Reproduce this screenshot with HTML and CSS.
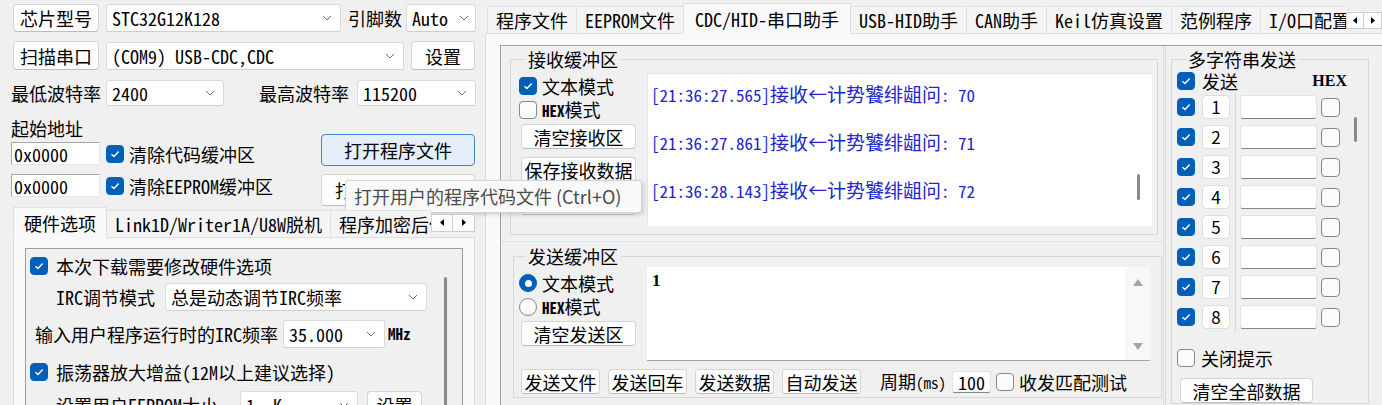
FILE: index.html
```html
<!DOCTYPE html>
<html lang="zh-CN">

<head>
    <meta charset="UTF-8">
    <title>STC-ISP</title>
    <link rel="stylesheet" href="styles.css">
</head>

<body>
    <div class="app">
        <!-- left: chip / port / hardware options -->
        <div class="left">
            <div class="row r1">
                <button class="btn side-btn">芯片型号</button>
                <div class="combo chip-combo"><span class="mono">STC32G12K128</span><svg class="chev" viewBox="0 0 10 6"><path d="M1 1l4 4 4-4"/></svg></div>
                <span class="lbl pin-lbl">引脚数</span>
                <div class="combo pin-combo"><span class="mono">Auto</span><svg class="chev" viewBox="0 0 10 6"><path d="M1 1l4 4 4-4"/></svg></div>
            </div>
            <div class="row r2">
                <button class="btn side-btn">扫描串口</button>
                <div class="combo port-combo"><span class="mono">(COM9) USB-CDC,CDC</span><svg class="chev" viewBox="0 0 10 6"><path d="M1 1l4 4 4-4"/></svg></div>
                <button class="btn set-btn">设置</button>
            </div>
            <div class="row r3">
                <span class="lbl baud-lbl">最低波特率</span>
                <div class="combo baud-combo"><span class="mono">2400</span><svg class="chev" viewBox="0 0 10 6"><path d="M1 1l4 4 4-4"/></svg></div>
                <span class="lbl baud-lbl max">最高波特率</span>
                <div class="combo baud-combo wide"><span class="mono">115200</span><svg class="chev" viewBox="0 0 10 6"><path d="M1 1l4 4 4-4"/></svg></div>
            </div>

            <div class="addr">
                <div class="addr-fields">
                    <div class="addr-title">起始地址</div>
                    <div class="addr-row">
                        <div class="field"><span class="mono">0x0000</span></div>
                        <span class="chk on"><svg viewBox="0 0 12 12"><path d="M2.5 6.2l2.4 2.4 4.8-5"/></svg></span>
                        <span class="addr-text">清除代码缓冲区</span>
                    </div>
                    <div class="addr-row second">
                        <div class="field"><span class="mono">0x0000</span></div>
                        <span class="chk on"><svg viewBox="0 0 12 12"><path d="M2.5 6.2l2.4 2.4 4.8-5"/></svg></span>
                        <span class="addr-text">清除<span class="mono">EEPROM</span>缓冲区</span>
                    </div>
                </div>
                <div class="addr-btns">
                    <button class="btn open-btn focus">打开程序文件</button>
                    <button class="btn open-btn">打开<span class="mono">EEPROM</span>文件</button>
                </div>
            </div>

            <div class="tabs hw-tabs">
                <div class="tab-list">
                    <div class="tab active">硬件选项</div>
                    <div class="tab"><span class="mono">Link1D/Writer1A/U8W</span>脱机</div>
                    <div class="tab">程序加密后传输</div>
                </div>
                <div class="tab-arrows">
                    <span class="arr"><svg viewBox="0 0 4 7"><path d="M4 0v7L0 3.5z"/></svg></span>
                    <span class="arr"><svg viewBox="0 0 4 7"><path d="M0 0v7l4-3.5z"/></svg></span>
                </div>
            </div>
            <div class="hw-body">
                <div class="hw-box">
                    <div class="hw-opts">
                        <div class="hw-row">
                            <span class="chk on"><svg viewBox="0 0 12 12"><path d="M2.5 6.2l2.4 2.4 4.8-5"/></svg></span>
                            <span class="hw-text">本次下载需要修改硬件选项</span>
                        </div>
                        <div class="hw-row irc">
                            <span class="irc-lbl"><span class="mono">IRC</span>调节模式</span>
                            <div class="combo irc-combo"><span>总是动态调节<span class="mono">IRC</span>频率</span><svg class="chev" viewBox="0 0 10 6"><path d="M1 1l4 4 4-4"/></svg></div>
                        </div>
                        <div class="hw-row freq">
                            <span class="freq-lbl">输入用户程序运行时的<span class="mono">IRC</span>频率</span>
                            <div class="combo freq-combo"><span class="mono">35.000</span><svg class="chev" viewBox="0 0 10 6"><path d="M1 1l4 4 4-4"/></svg></div>
                            <span class="mono unit">MHz</span>
                        </div>
                        <div class="hw-row gain">
                            <span class="chk on"><svg viewBox="0 0 12 12"><path d="M2.5 6.2l2.4 2.4 4.8-5"/></svg></span>
                            <span class="hw-text">振荡器放大增益<span class="mono">(12M</span>以上建议选择<span class="mono">)</span></span>
                        </div>
                        <div class="hw-row eeprom">
                            <span class="eep-lbl">设置用户<span class="mono">EEPROM</span>大小</span>
                            <div class="combo eep-combo"><span class="mono">1 &nbsp;K</span><svg class="chev" viewBox="0 0 10 6"><path d="M1 1l4 4 4-4"/></svg></div>
                            <button class="btn eep-btn">设置</button>
                        </div>
                    </div>
                    <div class="vscroll"><span class="thumb"></span></div>
                </div>
            </div>
        </div>

        <!-- right: serial assistant -->
        <div class="right">
            <div class="tabs right-tabs">
                <div class="tab-list">
                    <div class="tab">程序文件</div>
                    <div class="tab"><span class="mono">EEPROM</span>文件</div>
                    <div class="tab active"><span class="mono">CDC/HID-</span>串口助手</div>
                    <div class="tab"><span class="mono">USB-HID</span>助手</div>
                    <div class="tab"><span class="mono">CAN</span>助手</div>
                    <div class="tab"><span class="mono">Keil</span>仿真设置</div>
                    <div class="tab">范例程序</div>
                    <div class="tab"><span class="mono">I/O</span>口配置工具</div>
                </div>
                <div class="tab-arrows">
                    <span class="arr"><svg viewBox="0 0 4 7"><path d="M4 0v7L0 3.5z"/></svg></span>
                    <span class="arr"><svg viewBox="0 0 4 7"><path d="M0 0v7l4-3.5z"/></svg></span>
                </div>
            </div>
            <div class="right-body">
                <div class="frame">
                    <div class="main">
                        <div class="recv-pane">
                            <fieldset class="grp recv">
                                <legend>接收缓冲区</legend>
                                <div class="grp-body">
                                    <div class="grp-ctrls">
                                        <div class="opt first">
                                            <span class="chk on"><svg viewBox="0 0 12 12"><path d="M2.5 6.2l2.4 2.4 4.8-5"/></svg></span>
                                            <span>文本模式</span>
                                        </div>
                                        <div class="opt">
                                            <span class="chk"></span>
                                            <span><span class="mono hex">HEX</span>模式</span>
                                        </div>
                                        <button class="btn ctrl-btn">清空接收区</button>
                                        <button class="btn ctrl-btn">保存接收数据</button>
                                        <button class="btn ctrl-btn">复制接收数据</button>
                                    </div>
                                    <div class="recv-text">
                                        <div class="lines">
                                            <div class="ln"><span class="ts">[21:36:27.565]</span>接收←计势饕绯龃问<span class="ts">: 70</span></div>
                                            <div class="ln"><span class="ts">[21:36:27.861]</span>接收←计势饕绯龃问<span class="ts">: 71</span></div>
                                            <div class="ln"><span class="ts">[21:36:28.143]</span>接收←计势饕绯龃问<span class="ts">: 72</span></div>
                                        </div>
                                        <div class="text-scroll"><span class="thumb"></span></div>
                                    </div>
                                </div>
                            </fieldset>
                        </div>

                        <fieldset class="grp send">
                            <legend>发送缓冲区</legend>
                            <div class="grp-body">
                                <div class="grp-ctrls">
                                    <div class="opt first">
                                        <span class="radio on"></span>
                                        <span>文本模式</span>
                                    </div>
                                    <div class="opt">
                                        <span class="radio"></span>
                                        <span><span class="mono hex">HEX</span>模式</span>
                                    </div>
                                    <button class="btn ctrl-btn">清空发送区</button>
                                </div>
                                <div class="send-text">
                                    <div class="send-val">1</div>
                                    <div class="text-scroll arrows">
                                        <svg viewBox="0 0 10 7"><path d="M5 0l5 7H0z"/></svg>
                                        <svg viewBox="0 0 10 7"><path d="M0 0h10L5 7z"/></svg>
                                    </div>
                                </div>
                            </div>
                            <div class="send-bar">
                                <button class="btn bar-btn">发送文件</button>
                                <button class="btn bar-btn">发送回车</button>
                                <button class="btn bar-btn">发送数据</button>
                                <button class="btn bar-btn">自动发送</button>
                                <span class="period">周期<span class="mono">(ms)</span></span>
                                <div class="edit period-val"><span class="mono">100</span></div>
                                <span class="chk"></span>
                                <span class="match">收发匹配测试</span>
                            </div>
                        </fieldset>
                    </div>

                    <div class="side">
                        <fieldset class="grp multi">
                            <legend>多字符串发送</legend>
                            <div class="ms-head">
                                <span class="chk on"><svg viewBox="0 0 12 12"><path d="M2.5 6.2l2.4 2.4 4.8-5"/></svg></span>
                                <span class="ms-send">发送</span>
                                <span class="ms-hex">HEX</span>
                            </div>
                            <div class="ms-body">
                                <div class="ms-rows">
                                    <div class="ms-row"><span class="chk on"><svg viewBox="0 0 12 12"><path d="M2.5 6.2l2.4 2.4 4.8-5"/></svg></span><button class="btn num">1</button><span class="ms-div"></span><div class="edit ms-edit"></div><span class="chk ms-chk"></span></div>
                                    <div class="ms-row"><span class="chk on"><svg viewBox="0 0 12 12"><path d="M2.5 6.2l2.4 2.4 4.8-5"/></svg></span><button class="btn num">2</button><span class="ms-div"></span><div class="edit ms-edit"></div><span class="chk ms-chk"></span></div>
                                    <div class="ms-row"><span class="chk on"><svg viewBox="0 0 12 12"><path d="M2.5 6.2l2.4 2.4 4.8-5"/></svg></span><button class="btn num">3</button><span class="ms-div"></span><div class="edit ms-edit"></div><span class="chk ms-chk"></span></div>
                                    <div class="ms-row"><span class="chk on"><svg viewBox="0 0 12 12"><path d="M2.5 6.2l2.4 2.4 4.8-5"/></svg></span><button class="btn num">4</button><span class="ms-div"></span><div class="edit ms-edit"></div><span class="chk ms-chk"></span></div>
                                    <div class="ms-row"><span class="chk on"><svg viewBox="0 0 12 12"><path d="M2.5 6.2l2.4 2.4 4.8-5"/></svg></span><button class="btn num">5</button><span class="ms-div"></span><div class="edit ms-edit"></div><span class="chk ms-chk"></span></div>
                                    <div class="ms-row"><span class="chk on"><svg viewBox="0 0 12 12"><path d="M2.5 6.2l2.4 2.4 4.8-5"/></svg></span><button class="btn num">6</button><span class="ms-div"></span><div class="edit ms-edit"></div><span class="chk ms-chk"></span></div>
                                    <div class="ms-row"><span class="chk on"><svg viewBox="0 0 12 12"><path d="M2.5 6.2l2.4 2.4 4.8-5"/></svg></span><button class="btn num">7</button><span class="ms-div"></span><div class="edit ms-edit"></div><span class="chk ms-chk"></span></div>
                                    <div class="ms-row"><span class="chk on"><svg viewBox="0 0 12 12"><path d="M2.5 6.2l2.4 2.4 4.8-5"/></svg></span><button class="btn num">8</button><span class="ms-div"></span><div class="edit ms-edit"></div><span class="chk ms-chk"></span></div>
                                </div>
                                <div class="ms-scroll"><span class="thumb"></span></div>
                            </div>
                            <div class="close-tip">
                                <span class="chk"></span>
                                <span>关闭提示</span>
                            </div>
                            <button class="btn clear-all">清空全部数据</button>
                        </fieldset>
                    </div>
                </div>
            </div>
        </div>

        <div class="tooltip">打开用户的程序代码文件 (Ctrl+O)</div>
    </div>
</body>

</html>
```

FILE: styles.css
```css
* {
    box-sizing: border-box;
}

html,
body {
    margin: 0;
}

body {
    width: 1382px;
    height: 405px;
    overflow: hidden;
    background: #f0f0f0;
    color: #000;
    font-family: "Noto Sans CJK SC", "Noto Sans", sans-serif;
    font-size: 18px;
    line-height: 20px;
}

.mono {
    font-family: "Noto Sans Mono CJK SC", "Liberation Mono", monospace;
}

.app {
    position: relative;
    display: flex;
    height: 405px;
}

/* ---- shared controls ---- */

.btn {
    display: flex;
    align-items: center;
    justify-content: center;
    flex: none;
    height: 25px;
    padding: 0;
    font: inherit;
    color: #000;
    white-space: nowrap;
    background: #fdfdfd;
    border: 1px solid #d4d4d4;
    border-bottom-color: #bdbdbd;
    border-radius: 4px;
}

.combo {
    display: flex;
    align-items: center;
    justify-content: space-between;
    flex: none;
    height: 28px;
    padding: 0 8px 0 5px;
    white-space: nowrap;
    background: #fff;
    border: 1px solid #dadada;
    border-bottom-color: #cfcfcf;
    border-radius: 3px;
}

.chev {
    flex: none;
    width: 10px;
    height: 6px;
    fill: none;
    stroke: #707070;
    stroke-width: 1;
}

.chk {
    display: flex;
    align-items: center;
    justify-content: center;
    flex: none;
    width: 18px;
    height: 18px;
    background: #fbfbfb;
    border: 1px solid #878787;
    border-radius: 4px;
}

.chk.on {
    background: #005fb8;
    border-color: #005fb8;
}

.chk svg {
    width: 12px;
    height: 12px;
    fill: none;
    stroke: #fff;
    stroke-width: 1.4;
}

.radio {
    display: flex;
    align-items: center;
    justify-content: center;
    flex: none;
    width: 18px;
    height: 18px;
    background: #fbfbfb;
    border: 1px solid #878787;
    border-radius: 50%;
}

.radio.on {
    background: #005fb8;
    border-color: #005fb8;
}

.radio.on::after {
    content: "";
    width: 7px;
    height: 7px;
    background: #fff;
    border-radius: 50%;
}

.field {
    display: flex;
    align-items: center;
    width: 89px;
    height: 23px;
    padding-left: 2px;
    background: #fff;
    border: 1px solid;
    border-color: #a8a8a8 #e8e8e8 #e8e8e8 #a8a8a8;
}

.edit {
    display: flex;
    align-items: center;
    flex: none;
    background: #fff;
    border: 1px solid #e3e3e3;
    border-bottom-color: #858585;
    border-radius: 3px;
}

/* ---- tabs ---- */

.tabs {
    position: relative;
    z-index: 1;
    display: flex;
    height: 31px;
    margin-bottom: -1px;
}

.tab-list {
    display: flex;
    align-items: flex-end;
    flex: 1;
    min-width: 0;
    overflow: hidden;
}

.tab {
    display: flex;
    align-items: center;
    justify-content: center;
    flex: none;
    height: 28px;
    padding: 0 8px;
    margin-right: -1px;
    white-space: nowrap;
    background: #f4f4f4;
    border: 1px solid #e0e0e0;
}

.tab.active {
    position: relative;
    z-index: 1;
    height: 31px;
    padding: 0 10px;
    background: #f9f9f9;
    border-bottom: none;
}

.tab-arrows {
    display: flex;
    flex: none;
    align-self: center;
}

.arr {
    display: flex;
    align-items: center;
    justify-content: center;
    width: 20px;
    height: 18px;
    background: #fdfdfd;
    border: 1px solid #cdcdcd;
}

.arr + .arr {
    border-left: none;
}

.arr svg {
    width: 4px;
    height: 7px;
    fill: #000;
}

/* ---- left panel ---- */

.left {
    flex: none;
    width: 484px;
    padding: 4px 0 0 11px;
}

.row {
    display: flex;
    align-items: center;
}

.r1 {
    height: 28px;
}

.r2 {
    height: 29px;
    margin-top: 9px;
}

.r3 {
    height: 26px;
    margin-top: 10px;
}

.r1 .btn,
.r2 .btn {
    height: 100%;
}

.r3 .combo {
    height: 26px;
}

.side-btn {
    width: 86px;
    margin-left: 2px;
}

.chip-combo {
    width: 235px;
    margin-left: 7px;
}

.pin-lbl {
    width: 58px;
    margin-left: 7px;
}

.pin-combo {
    width: 70px;
    padding-right: 6px;
}

.port-combo {
    width: 298px;
    margin-left: 7px;
}

.set-btn {
    width: 64px;
    margin-left: 7px;
}

.baud-lbl {
    width: 95px;
}

.baud-lbl.max {
    width: 98px;
    margin-left: 35px;
}

.baud-combo {
    width: 118px;
}

.baud-combo.wide {
    width: 119px;
}

.addr {
    display: flex;
    margin-top: 12px;
}

.addr-fields {
    width: 310px;
}

.addr-row {
    display: flex;
    align-items: center;
    height: 23px;
    margin-top: 4px;
}

.addr-row.second {
    margin-top: 9px;
}

.addr-row .chk {
    margin-left: 6px;
}

.addr-text {
    margin-left: 5px;
}

.addr-btns {
    display: flex;
    flex-direction: column;
    gap: 8px;
    padding-top: 16px;
}

.open-btn {
    width: 154px;
    height: 32px;
}

.open-btn.focus {
    background: #e4eff9;
    border-color: #3d86d4;
}

.hw-tabs {
    width: 462px;
    margin-top: 1px;
    margin-left: 2px;
}

.hw-tabs .arr {
    width: 22px;
}

.hw-body {
    width: 462px;
    height: 170px;
    margin-left: 2px;
    padding: 10px 11px 0;
    background: #f9f9f9;
    border: 1px solid #dcdcdc;
}

.hw-box {
    display: flex;
    height: 200px;
    background: #f0f0f0;
    border: 1px solid #9c9c9c;
}

.hw-opts {
    width: 407px;
    padding-left: 4px;
}

.hw-row {
    display: flex;
    align-items: center;
    height: 18px;
    margin-top: 8px;
    white-space: nowrap;
}

.hw-text {
    margin-left: 8px;
}

.hw-row.irc,
.hw-row.freq,
.hw-row.eeprom {
    height: 28px;
}

.hw-row.freq {
    margin-top: 9px;
}

.hw-row.gain {
    margin-top: 15px;
}

.hw-row.eeprom {
    margin-top: 10px;
}

.irc-lbl {
    width: 109px;
    margin-left: 26px;
}

.irc-combo {
    width: 262px;
}

.freq-lbl {
    width: 248px;
    margin-left: 5px;
}

.freq-combo {
    width: 102px;
}

.unit {
    margin-left: 3px;
    font-size: 15px;
    font-weight: 700;
}

.eep-lbl {
    width: 184px;
    margin-left: 26px;
}

.eep-combo {
    width: 118px;
}

.eep-btn {
    width: 55px;
    height: 28px;
    margin-left: 9px;
}

.vscroll {
    flex: 1;
    padding: 28px 0 0 11px;
}

.thumb {
    display: block;
    width: 3px;
    background: #8a8a8a;
    border-radius: 2px;
}

.vscroll .thumb {
    height: 130px;
}

/* ---- right panel ---- */

.right {
    flex: none;
    width: 898px;
}

.right-tabs {
    margin: 3px 0 -1px 3px;
}

.right-tabs .tab-arrows {
    margin-top: 3px;
}

.right-tabs .arr {
    width: 18px;
    height: 17px;
}

.right-tabs .tab.active {
    padding: 0 11px;
}

.right-body {
    height: 373px;
    margin-left: 1px;
    padding: 11px 0 0 14px;
    background: #f9f9f9;
    border: 1px solid #dcdcdc;
    border-right: none;
}

.frame {
    display: flex;
    height: 100%;
    background: #f0f0f0;
    border-top: 1px solid #a0a0a0;
    border-left: 1px solid #a0a0a0;
}

.main {
    flex: none;
    width: 662px;
}

.grp {
    min-width: 0;
    margin: 0;
    border: 1px solid #d8d8d8;
}

.grp legend {
    margin-left: 7px;
    padding: 0 2px;
    line-height: 20px;
}

.grp-body {
    display: flex;
}

.grp-ctrls {
    flex: none;
    width: 128px;
}

.opt {
    display: flex;
    align-items: center;
    gap: 5px;
    height: 18px;
    margin-top: 6px;
    white-space: nowrap;
}

.opt.first {
    margin-top: 8px;
}

.hex {
    font-size: 15px;
    font-weight: 700;
}

.ctrl-btn {
    width: 115px;
    margin: 8px 0 0 2px;
}

.opt + .ctrl-btn {
    margin-top: 5px;
}

.recv-pane {
    padding: 3px 0 6px;
    border-bottom: 1px solid #d3e3f0;
}

.recv {
    width: 648px;
    margin-left: 9px;
    padding: 0 5px 8px 8px;
}

.recv-text {
    display: flex;
    width: 505px;
    height: 153px;
    margin-top: 4px;
    background: #fff;
    border-top: 1px solid #e4e4e4;
    border-left: 1px solid #e4e4e4;
}

.lines {
    flex: 1;
    padding: 8px 0 0 3px;
    color: #2323cf;
    font-size: 19px;
    white-space: nowrap;
}

.ln {
    line-height: 24px;
    margin-bottom: 23px;
}

.ts {
    font-family: "Noto Sans Mono CJK SC", "Liberation Mono", monospace;
    font-size: 17px;
}

.text-scroll {
    flex: none;
    width: 25px;
    padding: 100px 0 0 10px;
}

.text-scroll .thumb {
    height: 26px;
}

.send {
    width: 649px;
    margin: 4px 0 0 12px;
    padding: 0 10px 3px 5px;
}

.send-text {
    display: flex;
    width: 503px;
    height: 94px;
    margin-top: 1px;
    background: #fff;
    border-bottom: 1px solid #a6a6a6;
}

.send-val {
    flex: 1;
    padding: 4px 0 0 5px;
    font-family: "Liberation Serif", serif;
    font-size: 17px;
    font-weight: 700;
}

.text-scroll.arrows {
    display: flex;
    flex-direction: column;
    justify-content: space-between;
    align-items: center;
    padding: 12px 0 10px;
    background: #f8f8f8;
}

.text-scroll.arrows svg {
    width: 10px;
    height: 7px;
    fill: #a4a4a4;
}

.send-bar {
    display: flex;
    align-items: center;
    gap: 8px;
    height: 25px;
    margin-top: 8px;
    white-space: nowrap;
}

.bar-btn {
    width: 79px;
}

.bar-btn:first-child {
    margin-left: 2px;
}

.period {
    margin-left: 11px;
}

.period .mono {
    font-size: 15px;
}

.period-val {
    width: 39px;
    height: 22px;
    margin-left: -2px;
    justify-content: center;
}

.send-bar .chk {
    margin-left: -3px;
}

.match {
    margin-left: -3px;
}

/* ---- multi-string send ---- */

.side {
    flex: 1;
    border-left: 3px double #cfe0ee;
}

.multi {
    width: 198px;
    margin: 2px 0 0 5px;
    padding: 0 3px 0 5px;
}

.multi legend {
    margin-left: 9px;
    line-height: 22px;
}

.ms-head {
    display: flex;
    align-items: center;
    height: 19px;
    margin-top: 1px;
}

.ms-send {
    margin-left: 7px;
}

.ms-hex {
    margin: 0 18px 0 auto;
    font-family: "Liberation Serif", serif;
    font-size: 16px;
    font-weight: 700;
}

.ms-body {
    display: flex;
    margin-top: 2px;
}

.ms-row {
    display: flex;
    align-items: center;
    height: 30px;
}

.num {
    width: 28px;
    height: 24px;
    margin-left: 7px;
    background: #fff;
    border-color: #dcdcdc;
    font-size: 17px;
}

.ms-div {
    width: 1px;
    height: 30px;
    margin-left: 5px;
    background: #c7dcee;
}

.ms-edit {
    width: 77px;
    height: 24px;
    margin-left: 4px;
}

.ms-chk {
    width: 19px;
    height: 19px;
    margin-left: 4px;
}

.ms-scroll {
    padding: 25px 0 0 14px;
}

.ms-scroll .thumb {
    height: 25px;
}

.close-tip {
    display: flex;
    align-items: center;
    gap: 6px;
    height: 19px;
    margin-top: 16px;
}

.clear-all {
    width: 133px;
    margin: 11px 0 0 3px;
}

/* ---- hover tip over the open buttons ---- */

.tooltip {
    position: absolute;
    left: 345px;
    top: 180px;
    width: 297px;
    height: 33px;
    padding-left: 8px;
    line-height: 31px;
    color: #4a4a4a;
    white-space: nowrap;
    background: #f9f9f9;
    border: 1px solid #d2d2d2;
    border-radius: 3px;
    box-shadow: 2px 2px 4px rgba(0, 0, 0, 0.14);
}
```
